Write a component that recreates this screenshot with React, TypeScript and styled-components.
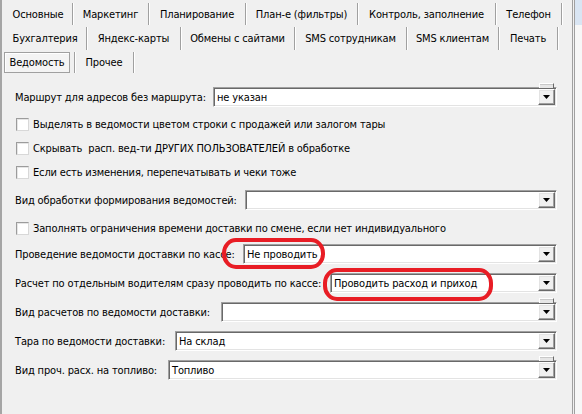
import React from "react";
import styled, { createGlobalStyle } from "styled-components";

const GlobalStyle = createGlobalStyle`
  html, body { margin: 0; padding: 0; background: #f0f0f0; }
  body {
    font-family: "DejaVu Sans Condensed", "Liberation Sans", Arial, sans-serif;
    font-stretch: condensed;
    font-size: 11px;
    letter-spacing: -0.15px;
    color: #000;
  }
  * { box-sizing: border-box; }
`;

const Window = styled.div`
  position: relative;
  display: flex;
  width: 582px;
  height: 414px;
  overflow: hidden;
  background: #f0f0f0;
`;

const Panel = styled.div`
  width: 573px;
  height: 100%;
  border-left: 2px solid #a5a5a5;
  border-right: 1px solid #a0a0a0;
  display: flex;
  flex-direction: column;
`;

const Edge = styled.div`
  width: 8px;
  margin-left: 1px;
  border-left: 1px solid #a0a0a0;
  background: linear-gradient(#d9e5f3 0 25px, #f7f7f7 25px);
`;

const TabStrip = styled.div`
  display: flex;
  flex-direction: column;
  gap: 2px;
  padding: 3px 0 0 2px;
`;

const TabRow = styled.div<{ $h: number }>`
  display: flex;
  height: ${(p) => p.$h}px;
`;

const Tab = styled.div<{ $w: number; $selected?: boolean }>`
  width: ${(p) => p.$w}px;
  flex: none;
  display: flex;
  align-items: center;
  justify-content: ${(p) => (p.$selected ? "flex-start" : "center")};
  border-right: 1px solid #a0a0a0;
  box-shadow: 1px 0 0 #ffffff;
  white-space: nowrap;
`;

const SelectedBox = styled.div`
  width: 66px;
  height: 100%;
  display: flex;
  align-items: center;
  justify-content: center;
  border: 1px solid #a0a0a0;
  box-shadow: inset 1px 1px 0 #ffffff;
  background: #f4f4f4;
`;

const Content = styled.div`
  display: flex;
  flex-direction: column;
  padding: 14px 15px 0 13px;
`;

const Row = styled.div<{ $mt: number }>`
  display: flex;
  align-items: center;
  height: 20px;
  margin-top: ${(p) => p.$mt}px;
`;

const Label = styled.div<{ $w: number }>`
  width: ${(p) => p.$w}px;
  flex: none;
  white-space: nowrap;
`;

const CheckRow = styled.label<{ $mt: number }>`
  display: flex;
  align-items: center;
  gap: 4px;
  height: 20px;
  margin-top: ${(p) => p.$mt}px;
  margin-left: 1px;
  white-space: nowrap;
`;

const CheckBox = styled.span`
  width: 13px;
  height: 13px;
  flex: none;
  background: #ffffff;
  border: 1px solid;
  border-color: #9c9c9c #d8d8d8 #d8d8d8 #9c9c9c;
  box-shadow: inset 1px 1px 0 #e6e6e6;
`;

const Combo = styled.div`
  position: relative;
  flex: 1;
  height: 20px;
  display: flex;
  align-items: center;
  background: #ffffff;
  border: 1px solid;
  border-color: #a0a0a0 #ffffff #ffffff #a0a0a0;
  box-shadow: inset 1px 1px 0 #696969, inset -1px -1px 0 #e3e3e3;
  padding-left: 3px;
  white-space: nowrap;
`;

const DropButton = styled.div`
  position: absolute;
  top: 1px;
  right: 1px;
  width: 17px;
  height: 16px;
  display: flex;
  align-items: center;
  justify-content: center;
  background: #f0f0f0;
  border: 1px solid;
  border-color: #ffffff #696969 #696969 #ffffff;
  box-shadow: inset -1px -1px 0 #a0a0a0, inset 1px 1px 0 #e3e3e3;
`;

const TopNub = styled.div`
  position: absolute;
  bottom: 100%;
  right: 2px;
  width: 15px;
  height: 5px;
  background: #e6e6e6;
  border: 1px solid;
  border-bottom: none;
  border-color: #ffffff #696969 transparent #ffffff;
  box-shadow: inset 0 1px 0 #c8c8c8;
`;

const Oval = styled.div<{ $x: number; $y: number; $w: number; $h: number }>`
  position: absolute;
  left: ${(p) => p.$x}px;
  top: ${(p) => p.$y}px;
  width: ${(p) => p.$w}px;
  height: ${(p) => p.$h}px;
  border: 4px solid #e81d25;
  border-radius: 14px / 15px;
  pointer-events: none;
`;

const Arrow = () => (
  <svg width="7" height="4" viewBox="0 0 7 4">
    <polygon points="0,0 7,0 3.5,4" fill="#000" />
  </svg>
);

type ComboProps = { value?: string; nub?: boolean };
const ComboBox = ({ value = "", nub = false }: ComboProps) => (
  <Combo>
    {nub && <TopNub />}
    {value}
    <DropButton>
      <Arrow />
    </DropButton>
  </Combo>
);

const row1 = [
  ["Основные", 69],
  ["Маркетинг", 76],
  ["Планирование", 97],
  ["План-е (фильтры)", 112],
  ["Контроль, заполнение", 138],
  ["Телефон", 66],
] as const;

const row2 = [
  ["Бухгалтерия", 83],
  ["Яндекс-карты", 94],
  ["Обмены с сайтами", 114],
  ["SMS сотрудникам", 112],
  ["SMS клиентам", 92],
  ["Печать", 59],
] as const;

export default function App() {
  return (
    <>
      <GlobalStyle />
      <Window>
        <Panel>
          <TabStrip>
            <TabRow $h={22}>
              {row1.map(([t, w]) => (
                <Tab key={t} $w={w}>{t}</Tab>
              ))}
            </TabRow>
            <TabRow $h={23}>
              {row2.map(([t, w]) => (
                <Tab key={t} $w={w}>{t}</Tab>
              ))}
            </TabRow>
            <TabRow $h={21}>
              <Tab $w={71} $selected>
                <SelectedBox>Ведомость</SelectedBox>
              </Tab>
              <Tab $w={59}>Прочее</Tab>
            </TabRow>
          </TabStrip>
          <Content>
            <Row $mt={0}>
              <Label $w={198}>Маршрут для адресов без маршрута:</Label>
              <ComboBox value="не указан" nub />
            </Row>
            <CheckRow $mt={7}>
              <CheckBox />
              Выделять в ведомости цветом строки с продажей или залогом тары
            </CheckRow>
            <CheckRow $mt={4}>
              <CheckBox />
              Скрывать&nbsp; расп. вед-ти ДРУГИХ ПОЛЬЗОВАТЕЛЕЙ в обработке
            </CheckRow>
            <CheckRow $mt={4}>
              <CheckBox />
              Если есть изменения, перепечатывать и чеки тоже
            </CheckRow>
            <Row $mt={8}>
              <Label $w={230}>Вид обработки формирования ведомостей:</Label>
              <ComboBox />
            </Row>
            <CheckRow $mt={8}>
              <CheckBox />
              Заполнять ограничения времени доставки по смене, если нет индивидуального
            </CheckRow>
            <Row $mt={6}>
              <Label $w={228}>Проведение ведомости доставки по кассе:</Label>
              <ComboBox value="Не проводить" />
            </Row>
            <Row $mt={9}>
              <Label $w={315}>Расчет по отдельным водителям сразу проводить по кассе:</Label>
              <ComboBox value="Проводить расход и приход" />
            </Row>
            <Row $mt={9}>
              <Label $w={206}>Вид расчетов по ведомости доставки:</Label>
              <ComboBox nub />
            </Row>
            <Row $mt={9}>
              <Label $w={160}>Тара по ведомости доставки:</Label>
              <ComboBox value="На склад" />
            </Row>
            <Row $mt={9}>
              <Label $w={153}>Вид проч. расх. на топливо:</Label>
              <ComboBox value="Топливо" nub />
            </Row>
          </Content>
        </Panel>
        <Edge />
        <Oval $x={222} $y={238} $w={103} $h={31} />
        <Oval $x={323} $y={268} $w={170} $h={33} />
      </Window>
    </>
  );
}
